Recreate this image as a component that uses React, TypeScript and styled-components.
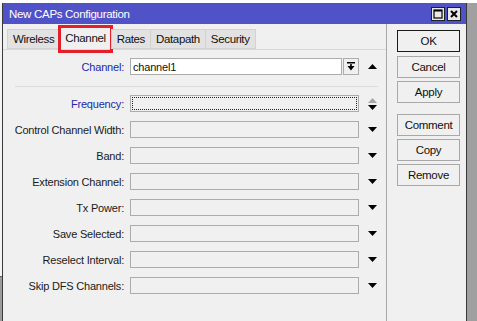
import React from "react";
import styled, { createGlobalStyle } from "styled-components";

const GlobalStyle = createGlobalStyle`
  html, body { margin: 0; padding: 0; background: #ffffff; }
  body { font-family: "Liberation Sans", Arial, sans-serif; }
`;

const Screen = styled.div`
  width: 477px;
  height: 321px;
  overflow: hidden;
  display: flex;
  flex-direction: column;
  background: #ffffff;
`;

const TopStrip = styled.div`
  height: 3px;
  background: #ffffff;
  flex: none;
`;

const Middle = styled.div`
  flex: 1;
  display: flex;
  min-height: 0;
`;

const LeftStrip = styled.div`
  width: 2px;
  flex: none;
  display: flex;
  flex-direction: column;
  background: #f4f4f4;
`;

const LeftStripBottom = styled.div`
  margin-top: auto;
  height: 44px;
  background: #9c9c9c;
  border-top: 1px solid #606060;
`;

const Window = styled.div`
  width: 463px;
  flex: none;
  display: flex;
  flex-direction: column;
  background: #f0f0f0;
  border-left: 1px solid #3a3a3a;
  border-right: 1px solid #3a3a3a;
`;

const RightStrip = styled.div`
  flex: 1;
  background: #a0a0a0;
`;

const TitleBar = styled.div`
  height: 21px;
  flex: none;
  display: flex;
  align-items: center;
  background: #5052c8;
  padding: 0 5px 0 6px;
`;

const Title = styled.span`
  color: #ffffff;
  font-size: 11.5px;
  letter-spacing: -0.3px;
  flex: 1;
`;

const TitleButton = styled.div`
  width: 12px;
  height: 12px;
  margin-left: 2px;
  background: #e8e8e8;
  border: 1px solid #202020;
  display: flex;
  align-items: center;
  justify-content: center;
`;

const Body = styled.div`
  flex: 1;
  display: flex;
  min-height: 0;
`;

const MainColumn = styled.div`
  width: 383px;
  flex: none;
  display: flex;
  flex-direction: column;
  border-right: 1px solid #a8a8a8;
`;

const TabRow = styled.div`
  height: 25px;
  flex: none;
  display: flex;
  align-items: flex-end;
  padding-left: 5px;
`;

const Tab = styled.div<{ $active?: boolean }>`
  position: relative;
  height: ${(p) => (p.$active ? 22 : 18)}px;
  padding: 0 5px;
  display: flex;
  align-items: center;
  font-size: 11.5px;
  letter-spacing: -0.35px;
  color: #101010;
  background: ${(p) => (p.$active ? "#f0f0f0" : "#e2e2e2")};
  border: 1px solid #d2d2d2;
  border-bottom: ${(p) => (p.$active ? "none" : "1px solid #d2d2d2")};
  margin-left: -1px;
  ${(p) =>
    p.$active &&
    `
    &::after {
      content: "";
      position: absolute;
      left: -2px;
      right: -2px;
      top: -2px;
      bottom: -4px;
      border: 3px solid #e3202a;
    }
  `}
`;

const Panel = styled.div`
  flex: 1;
  display: flex;
  flex-direction: column;
  padding-top: 8px;
  border-top: 1px solid #d8d8d8;
`;

const FieldRow = styled.div<{ $gapTop?: number }>`
  display: grid;
  grid-template-columns: 121px 229px 19px;
  column-gap: 6px;
  align-items: center;
  height: 17px;
  margin-top: ${(p) => p.$gapTop ?? 9}px;
`;

const Label = styled.span<{ $blue?: boolean }>`
  text-align: right;
  font-size: 11px;
  letter-spacing: -0.2px;
  color: ${(p) => (p.$blue ? "#2228a8" : "#1a1a1a")};
  white-space: nowrap;
`;

const InputBox = styled.div<{ $white?: boolean; $focus?: boolean }>`
  height: 17px;
  box-sizing: border-box;
  display: flex;
  align-items: center;
  background: ${(p) => (p.$white ? "#ffffff" : "#f0f0f0")};
  border: 1px solid #acacac;
  font-size: 11px;
  letter-spacing: -0.2px;
  color: #101010;
  padding-left: 2px;
  ${(p) =>
    p.$focus &&
    `
    outline: 1px dotted #202020;
    outline-offset: -3px;
  `}
`;

const ChannelCombo = styled.div`
  display: flex;
  height: 17px;
`;

const ComboText = styled(InputBox)`
  flex: 1;
`;

const ComboButton = styled.div`
  width: 16px;
  height: 17px;
  box-sizing: border-box;
  margin-left: 1px;
  border: 1px solid #acacac;
  background: #f0f0f0;
  display: flex;
  align-items: center;
  justify-content: center;
`;

const ArrowCell = styled.div`
  display: flex;
  flex-direction: column;
  align-items: flex-start;
  justify-content: center;
  padding-left: 3px;
  gap: 2px;
`;

const Separator = styled.div`
  height: 1px;
  background: #dcdcdc;
  margin: 11px 0 0 12px;
  width: 363px;
`;

const ButtonColumn = styled.div`
  flex: 1;
  display: flex;
  flex-direction: column;
  padding: 6px 0 0 10px;
`;

const Button = styled.div<{ $default?: boolean; $gapTop?: number }>`
  width: 63px;
  height: 22px;
  box-sizing: border-box;
  margin-top: ${(p) => p.$gapTop ?? 3}px;
  display: flex;
  align-items: center;
  justify-content: center;
  font-size: 11.5px;
  letter-spacing: -0.3px;
  color: #101010;
  background: #f0f0f0;
  border: 1px solid ${(p) => (p.$default ? "#1a1a1a" : "#a8a8a8")};
`;

const Down = ({ color = "#000" }: { color?: string }) => (
  <svg width="9" height="5" viewBox="0 0 9 5">
    <path d="M0 0 H9 L4.5 5 Z" fill={color} />
  </svg>
);

const Up = ({ color = "#000" }: { color?: string }) => (
  <svg width="9" height="5" viewBox="0 0 9 5">
    <path d="M0 5 H9 L4.5 0 Z" fill={color} />
  </svg>
);

const DropIcon = () => (
  <svg width="8" height="9" viewBox="0 0 8 9">
    <rect x="0" y="0" width="8" height="1.5" fill="#000" />
    <rect x="3.2" y="2" width="1.6" height="3" fill="#000" />
    <path d="M0.5 4 H7.5 L4 8.5 Z" fill="#000" />
  </svg>
);

const fields = [
  "Control Channel Width:",
  "Band:",
  "Extension Channel:",
  "Tx Power:",
  "Save Selected:",
  "Reselect Interval:",
  "Skip DFS Channels:",
];

export default function App() {
  return (
    <>
      <GlobalStyle />
      <Screen>
        <TopStrip />
        <Middle>
          <LeftStrip>
            <LeftStripBottom />
          </LeftStrip>
          <Window>
            <TitleBar>
              <Title>New CAPs Configuration</Title>
              <TitleButton>
                <svg width="10" height="10" viewBox="0 0 10 10">
                  <rect x="1" y="1" width="8" height="8" fill="none" stroke="#000" strokeWidth="1.2" />
                  <rect x="1" y="1" width="8" height="1.5" fill="#000" />
                </svg>
              </TitleButton>
              <TitleButton>
                <svg width="10" height="10" viewBox="0 0 10 10">
                  <path d="M2 2 L8 8 M8 2 L2 8" stroke="#000" strokeWidth="2" />
                </svg>
              </TitleButton>
            </TitleBar>
            <Body>
              <MainColumn>
                <TabRow>
                  <Tab>Wireless</Tab>
                  <Tab $active>Channel</Tab>
                  <Tab>Rates</Tab>
                  <Tab>Datapath</Tab>
                  <Tab>Security</Tab>
                </TabRow>
                <Panel>
                  <FieldRow $gapTop={0}>
                    <Label $blue>Channel:</Label>
                    <ChannelCombo>
                      <ComboText $white>channel1</ComboText>
                      <ComboButton>
                        <DropIcon />
                      </ComboButton>
                    </ChannelCombo>
                    <ArrowCell>
                      <Up />
                    </ArrowCell>
                  </FieldRow>
                  <Separator />
                  <FieldRow $gapTop={8}>
                    <Label $blue>Frequency:</Label>
                    <InputBox $focus />
                    <ArrowCell>
                      <Up color="#a8a8a8" />
                      <Down />
                    </ArrowCell>
                  </FieldRow>
                  {fields.map((f) => (
                    <FieldRow key={f}>
                      <Label>{f}</Label>
                      <InputBox />
                      <ArrowCell>
                        <Down />
                      </ArrowCell>
                    </FieldRow>
                  ))}
                </Panel>
              </MainColumn>
              <ButtonColumn>
                <Button $default $gapTop={0}>OK</Button>
                <Button $gapTop={4}>Cancel</Button>
                <Button>Apply</Button>
                <Button $gapTop={11}>Comment</Button>
                <Button>Copy</Button>
                <Button>Remove</Button>
              </ButtonColumn>
            </Body>
          </Window>
          <RightStrip />
        </Middle>
      </Screen>
    </>
  );
}
